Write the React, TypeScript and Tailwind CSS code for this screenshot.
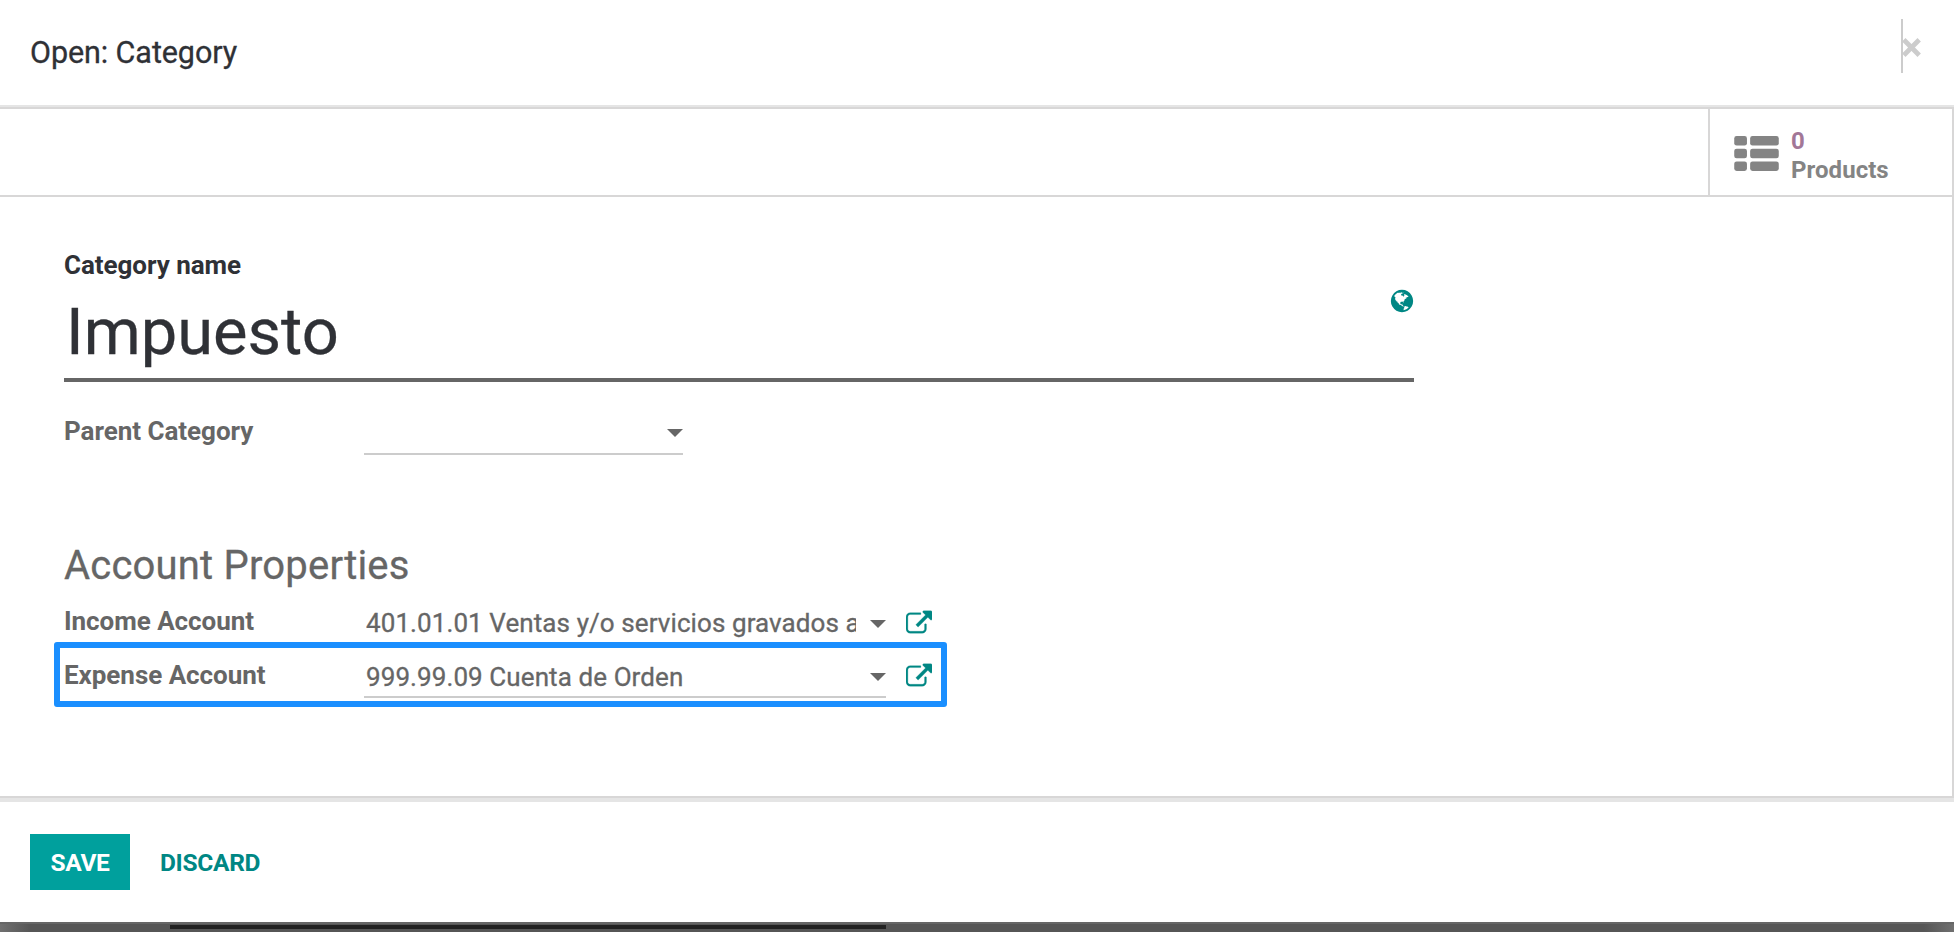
import type { ReactNode } from "react";

const EXTERNAL_LINK =
  "M1408 928v320q0 119-84.5 203.5t-203.5 84.5h-832q-119 0-203.5-84.5t-84.5-203.500v-832q0-119 84.5-203.5t203.5-84.500h704q14 0 23 9t9 23v64q0 14-9 23t-23 9h-704q-66 0-113 47t-47 113v832q0 66 47 113t113 47h832q66 0 113-47t47-113v-320q0-14 9-23t23-9h64q14 0 23 9t9 23zm384-864v512q0 26-19 45t-45 19-45-19l-176-176-652 652q-10 10-23 10t-23-10l-114-114q-10-10-10-23t10-23l652-652-176-176q-19-19-19-45t19-45 45-19h512q26 0 45 19t19 45z";

const GLOBE =
  "M896 128q209 0 385.500 103t279.500 279.500 103 385.500-103 385.500-279.500 279.500-385.500 103-385.500-103-279.500-279.500-103-385.500 103-385.500 279.500-279.500 385.500-103zm274 521q-2 1-9.500 9.500t-13.500 9.500q2 0 4.500-5t5-11 3.500-7q6-7 22-15 14-6 52-12 34-8 51 11-2-2 9.500-13t14.500-12q3-2 15-4.500t15-7.500l2-22q-12 1-17.500-7t-6.500-21q0 2-6 8 0-7-4.500-8t-11.500 1-9 1q-10-3-15-7.500t-8-16.500-4-15q-2-5-9.500-11t-9.500-10q-1-2-2.500-5.500t-3-6.500-4-5.500-5.500-2.500-7 5-7.500 10-4.500 5q-3-2-6-1.500t-4.500 1-4.500 3-5 3.500q-3 2-8.500 3t-8.500 2q15-5-1-11-10-4-16-3 9-4 7.500-12t-8.500-14h5q-1-4-8.500-8.500t-17.500-8.500-13-6q-8-5-34-9.500t-33-.5q-5 6-4.500 10.500t4 14 3.500 12.500q1 6-5.500 13t-6.500 12q0 7 14 15.500t10 21.500q-3 8-16 16t-16 12q-5 8-1.500 18.500t10.500 16.500q2 2 1.500 4t-3.500 4.500-5.500 4-6.500 3.500l-3 2q-11 5-20.500-6t-13.500-26q-7-25-16-30-23-8-29 1-5-13-41-26-25-9-58-4 6-1 0-15-7-15-19-12 3-6 4-17.500t1-13.500q3-13 12-23 1-1 7-8.500t9.500-13.500.5-6q35 4 50-11 5-5 11.500-17t10.500-17q9-6 14-5.500t14.500 5.500 14.500 5q14 1 15.500-11t-7.500-20q12 1 3-17-4-7-8-9-12-4-27 5-8 4 2 8-1-1-9.500 10.500t-16.500 17.500-16-5q-1-1-5.500-13.500t-9.500-13.500q-8 0-16 15 3-8-11-15t-24-8q19-12-8-27-7-4-20.500-5t-19.500 4q-5 7-5.500 11.500t5 8 10.500 5.500 11.500 4 8.500 3q14 10 8 14-2 1-8.500 3.500t-11.500 4.500-6 4q-3 4 0 14t-2 14q-5-5-9-17.500t-7-16.500q7 9-25 6l-10-1q-4 0-16 2t-20.500 1-13.500-8q-4-8 0-20 1-4 4-2-4-3-11-9.500t-10-8.500q-46 15-94 41 6 1 12-1 5-2 13-6.500t10-5.500q34-14 42-7l5-5q14 16 20 25-7-4-30-1-20 6-22 12 7 12 5 18-4-3-11.500-10t-14.500-11-15-5q-16 0-22 1-146 80-235 222 7 7 12 8 4 1 5 9t2.500 11 11.500-3q9 8 3 19 1-1 44 27 19 17 21 21 3 11-10 18-1-2-9-9t-9-4q-3 5 .5 18.500t10.500 12.500q-7 0-9.500 16t-2.500 35.500-1 23.500l2 1q-3 12 5.500 34.500t21.500 19.500q-13 3 20 43 6 8 8 9 3 2 12 7.500t15 10 10 10.500q4 5 10 22.500t14 23.500q-2 6 9.500 20t10.500 23q-1 0-2.500 1t-2.500 1q3 7 15.500 14t15.500 13q1 3 2 10t3 11 8 2q2-20-24-62-15-25-17-29-3-5-5.500-15.500t-4.500-14.500q2 0 6 1.500t8.500 3.500 7.500 4 2 3q-3 7 2 17.500t12 18.500 17 19 12 13q6 6 14 19.500t0 13.500q9 0 20 10.500t17 19.500q5 8 8 26t5 24q2 7 8.500 13.500t12.500 9.500l16 8 13 7q5 2 18.500 10.500t21.500 11.500q10 4 16 4t14.500-2.500 13.500-3.500q15-2 29 15t21 21q36 19 55 11-2 1 .5 7.500t8 15.500 9 14.500 5.500 8.500q5 6 18 15t18 15q6-4 7-9-3 8 7 20t18 10q14-3 14-32-31 15-49-18 0-1-2.500-5.500t-4-8.500-2.500-8.500 0-7.500 5-3q9 0 10-3.500t-2-12.500-4-13q-1-8-11-20t-12-15q-5 9-16 8t-16-9q0 1-1.500 5.500t-1.500 6.500q-13 0-15-1 1-3 2.500-17.500t3.500-22.500q1-4 5.500-12t7.500-14.500 4-12.500-4.500-9.500-17.500-2.500q-19 1-26 20-1 3-3 10.500t-5 11.500-9 7q-7 3-24 2t-24-5q-13-8-22.500-29t-9.500-37q0-10 2.500-26.500t3-25-5.500-24.500q3-2 9-9.500t10-10.500q2-1 4.500-1.500t4.500 0 4-1.500 3-6q-1-1-4-3-3-3-4-3 7 3 28.500-1.500t27.500 1.500q15 11 22-2 0-1-2.500-9.500t-.5-13.500q5 27 29 9 3 3 15.500 5t17.500 5q3 2 7 5.500t5.500 4.500 5-.5 8.500-6.500q10 14 12 24 11 40 19 44 7 3 11 2t4.500-9.500 0-14-1.500-12.500l-1-8v-18l-1-8q-15-3-18.500-12t1.500-18.500 15-18.500q1-1 8-3.500t15.500-6.500 12.500-8q21-19 15-35 7 0 11-9-1 0-5-3t-7.500-5-4.500-2q9-5 2-16 5-3 7.500-11t7.500-10q9 12 21 2 8-8 1-16 5-7 20.500-10.500t18.500-9.500q7 2 8-2t1-12 3-12q4-5 15-9t13-5l17-11q3-4 0-4 18 2 31-11 10-11-6-20 3-6-3-9.500t-15-5.500q3-1 11.500-.5t10.500-1.500q15-10-7-16-17-5-43 12zm-163 877q206-36 351-189-3-3-12.500-4.500t-12.500-3.500q-18-7-24-8 1-7-2.500-13t-8-9-12.500-8-11-7q-2-2-7-6t-7-5.500-7.500-4.500-8.500-2-10 1l-3 1q-3 1-5.500 2.500t-5.500 3-4 3 0 2.500q-21-17-36-22-5-1-11-5.500t-10.500-7-10-1.500-11.500 7q-5 5-6 15t-2 13q-7-5 0-17.500t2-18.500q-3-6-10.500-4.500t-12 4.500-11.500 8.500-9 6.500-8.500 5.500-8.500 7.500q-3 4-6 12t-5 11q-2-4-11.500-6.500t-9.500-5.500q2 10 4 35t5 38q7 31-12 48-27 25-29 40-4 22 12 26 0 7-8 20.500t-7 21.500q0 6 2 16z";

function Caret() {
  return (
    <svg className="h-[8px] w-[16px] shrink-0" viewBox="0 0 16 8" fill="#666666" aria-hidden="true">
      <path d="M0 0h16L8 8z" />
    </svg>
  );
}

function ListIcon() {
  return (
    <svg className="h-[35px] w-[45px] shrink-0" viewBox="0 0 1792 1408" fill="#848484" aria-hidden="true">
      {[0, 512, 1024].map((y) => (
        <g key={y}>
          <rect x="0" y={y} width="512" height="384" rx="96" />
          <rect x="640" y={y} width="1152" height="384" rx="96" />
        </g>
      ))}
    </svg>
  );
}

function OpenRecord() {
  return (
    <button type="button" className="ml-[20px] shrink-0" aria-label="Open record">
      <svg
        className="block h-[26px] w-[26px]"
        viewBox="0 0 1792 1792"
        fill="#008784"
        stroke="#008784"
        strokeWidth="20"
        aria-hidden="true"
      >
        <path d={EXTERNAL_LINK} transform="translate(0 128)" />
      </svg>
    </button>
  );
}

function AccountRow({ label, children, active }: { label: string; children: ReactNode; active?: boolean }) {
  return (
    <div className="flex h-[53px] items-start">
      <div
        className={
          active
            ? "w-[300px] pt-[4px] text-[26px] leading-[34px] font-bold tracking-[-0.04px]"
            : "w-[300px] pt-[3px] text-[26px] leading-[34px] font-bold tracking-[-0.04px]"
        }
      >
        {label}
      </div>
      <div
        className={
          active
            ? "flex h-[44px] w-[522px] items-start border-b-2 border-[#cccccc] pt-[5px] pl-[2px]"
            : "flex h-[44px] w-[522px] items-start border-b-2 border-transparent pt-[4px] pl-[2px]"
        }
      >
        <div className="w-[490px] overflow-hidden text-[26px] leading-[36px] tracking-[0.09px] whitespace-nowrap [-webkit-text-stroke:0.3px]">
          {children}
        </div>
        <div className={active ? "mt-[14px] ml-auto" : "mt-[15px] ml-auto"}>
          <Caret />
        </div>
      </div>
      <div className="pt-[8px]">
        <OpenRecord />
      </div>
    </div>
  );
}

export default function App() {
  return (
    <div className="flex h-[932px] w-[1954px] flex-col overflow-hidden bg-white font-['Roboto',sans-serif] text-[#666666]">
      <header className="flex h-[107px] shrink-0 items-start justify-between border-b-2 border-[#e5e5e5] pl-[30px]">
        <h1 className="pt-[33px] text-[30.500px] leading-[40px] tracking-[-0.08px] text-[#2f3136] [-webkit-text-stroke:0.3px]">
          Open: Category
        </h1>
        <button type="button" className="mt-[19px] mr-[33px] flex h-[54px] border-l-2 border-[#cccccc]" aria-label="Close">
          <svg className="mt-[19px] -ml-px h-[19px] w-[19px]" viewBox="0 0 19 19" stroke="#cccccc" strokeWidth="4.800" aria-hidden="true">
            <path d="M1.800 1.800l15.400 15.400M17.200 1.800L1.800 17.200" />
          </svg>
        </button>
      </header>

      <main className="flex h-[691px] shrink-0 flex-col border-y-2 border-r-2 border-[#d8d7d7]">
        <div className="flex h-[88px] shrink-0 justify-end border-b-2 border-[#d8d7d7]">
          <button type="button" className="flex w-[244px] items-start border-l-2 border-[#d8d7d7] pl-[24px] text-left">
            <span className="pt-[27px]">
              <ListIcon />
            </span>
            <span className="flex flex-col pt-[18px] pl-[12px] text-[24px] leading-[29px] font-bold tracking-[0.05px] text-[#848484]">
              <span className="text-[#a27797]">0</span>
              <span>Products</span>
            </span>
          </button>
        </div>

        <div className="flex flex-col pl-[64px]">
          <label className="pt-[51px] text-[26px] leading-[34px] font-bold tracking-[-0.05px] text-[#2f3136]">Category name</label>
          <div className="flex h-[100px] w-[1350px] items-start justify-between border-b-4 border-[#666666] pl-[2px] text-[#2f3136]">
            <span className="pt-[12px] text-[65px] leading-[76px] [-webkit-text-stroke:0.3px]">Impuesto</span>
            <svg className="mt-[6px] mr-[-1px] h-[26px] w-[26px]" viewBox="0 0 1792 1792" fill="#008784" aria-hidden="true">
              <path d={GLOBE} />
            </svg>
          </div>

          <div className="flex pt-[31px]">
            <div className="w-[300px] pt-[1px] text-[26px] leading-[34px] font-bold tracking-[-0.03px]">Parent Category</div>
            <div className="flex h-[42px] w-[319px] items-center justify-end border-b-2 border-[#cccccc]">
              <Caret />
            </div>
          </div>

          <h2 className="pt-[86px] text-[40px] leading-[50px] tracking-[0.2px] [-webkit-text-stroke:0.3px]">Account Properties</h2>

          <div className="flex flex-col pt-[10px]">
            <AccountRow label="Income Account">401.01.01 Ventas y/o servicios gravados a la tasa</AccountRow>
            <div className="relative">
              <AccountRow label="Expense Account" active>
                999.99.09 Cuenta de Orden
              </AccountRow>
              <div className="pointer-events-none absolute top-[-12px] left-[-10px] h-[65px] w-[893px] rounded-[3px] border-[6px] border-[#1a8fff]" />
            </div>
          </div>
        </div>
      </main>

      <footer className="flex h-[124px] shrink-0 items-start border-t-4 border-[#e5e5e5] pt-[32px] pl-[30px] text-[24.500px] font-bold tracking-[-0.3px]">
        <button type="button" className="h-[56px] w-[100px] bg-[#00a09d] pt-[2px] text-white">
          SAVE
        </button>
        <button type="button" className="ml-[30px] h-[56px] pt-[2px] text-[#008784]">
          DISCARD
        </button>
      </footer>

      <div className="h-[10px] shrink-0 border-t-2 border-[#666666] bg-linear-[90deg,#707070_0px,#565656_30px,#565656_1924px,#707070_1954px] pt-[1px] pl-[170px]">
        <div className="h-[4px] w-[716px] bg-[#222222]" />
      </div>
    </div>
  );
}
